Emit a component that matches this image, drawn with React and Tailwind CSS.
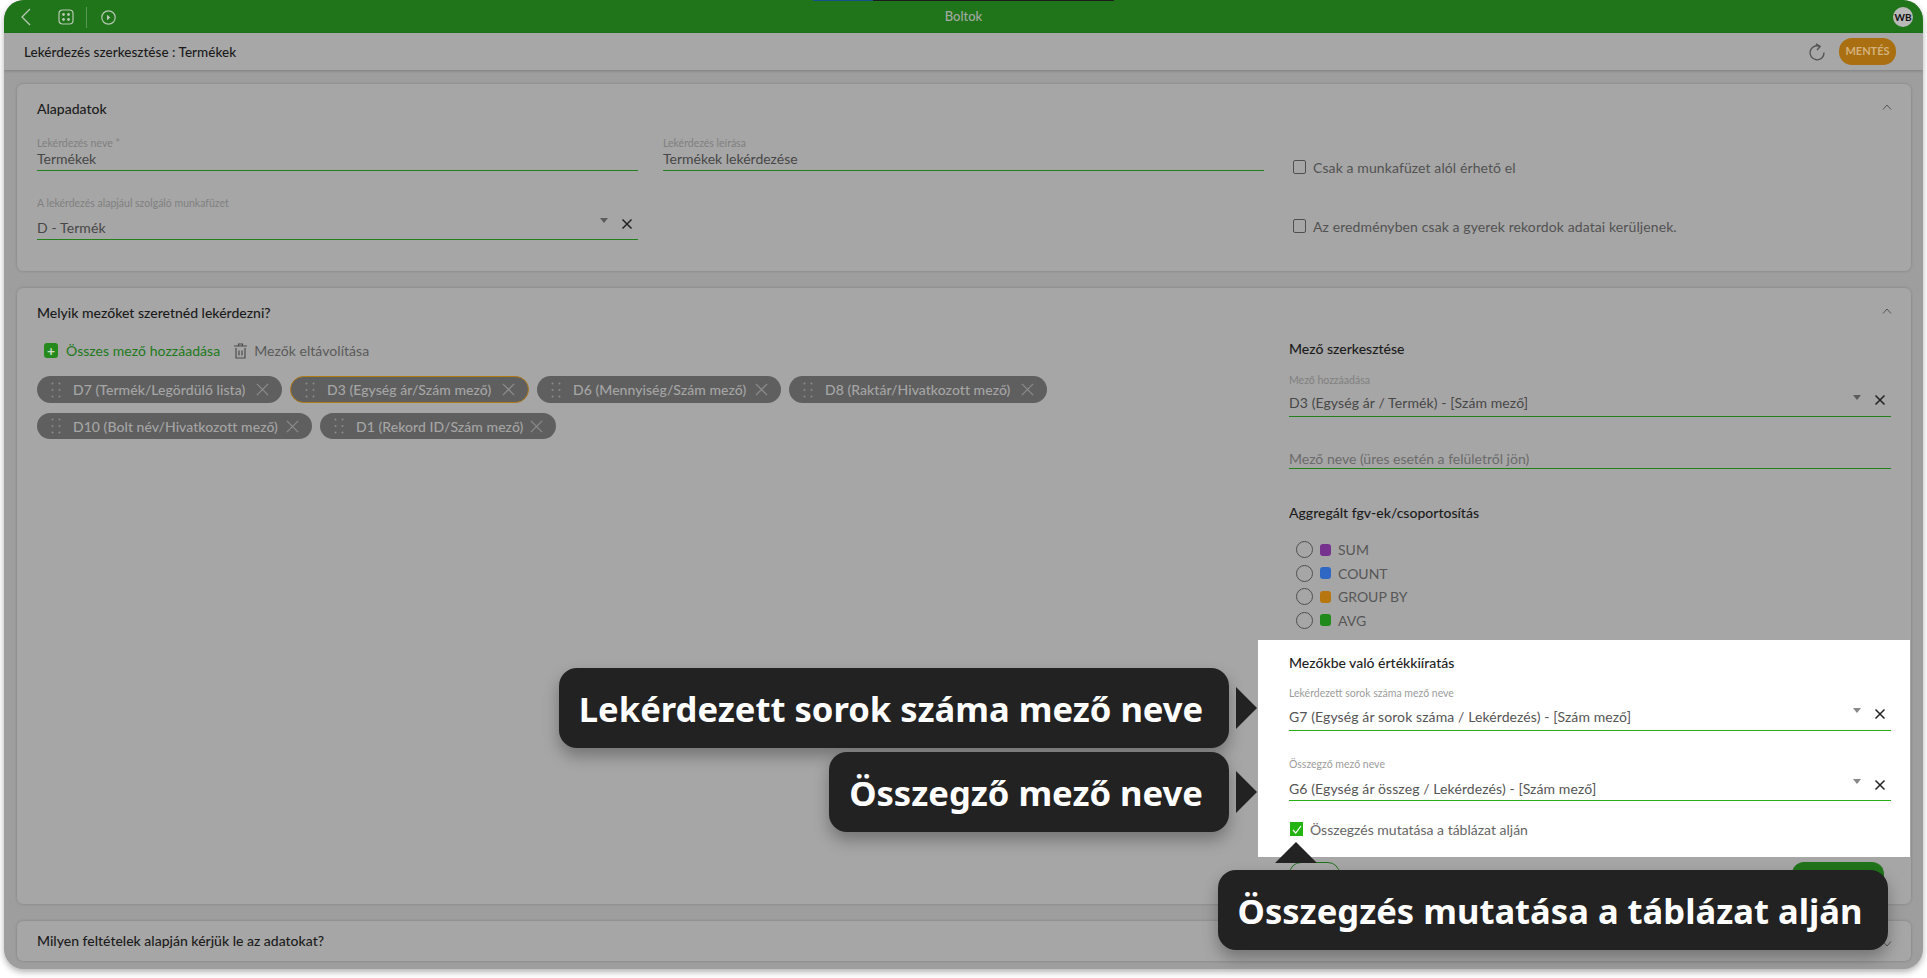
const FONT = "font-['Lato','Noto_Sans',sans-serif]";

function X({ size = 12, color = '#222', w = 1.5 }) {
  return (
    <svg width={size} height={size} viewBox="0 0 12 12" fill="none" stroke={color} strokeWidth={w} className="shrink-0">
      <path d="M1.5 1.5l9 9M10.5 1.5l-9 9" />
    </svg>
  );
}

function Field({ label, value }) {
  return (
    <div>
      <div className="h-[14px] text-[10.5px] leading-[14px] text-[#808080]">{label}</div>
      <div className="h-[20px] border-b border-[#23801a] box-content">
        <div className="text-[14px] leading-[18px] text-[#474747]">{value}</div>
      </div>
    </div>
  );
}

function Select({ label, value, pt, h, white, arrowTop = 'top-[8px]', xTop = 'top-[8px]' }) {
  return (
    <div>
      <div className={`h-[14px] text-[10.5px] leading-[14px] whitespace-nowrap ${white ? 'text-[#9c9c9c]' : 'text-[#808080]'}`}>{label}</div>
      <div className={`relative ${h} ${pt} border-b ${white ? 'border-[#27b214]' : 'border-[#23801a]'} box-content`}>
        <div className={`text-[14px] leading-[18px] tracking-[0.1px] ${white ? 'text-[#555]' : 'text-[#474747]'}`}>{value}</div>
        <div className={`absolute right-[30px] ${arrowTop} w-0 h-0 border-x-[4px] border-x-transparent border-t-[5px] ${white ? 'border-t-[#888]' : 'border-t-[#5c5c5c]'}`} />
        <div className={`absolute right-[5px] ${xTop}`}>
          <X size={12} color="#222" w={1.5} />
        </div>
      </div>
    </div>
  );
}

function Check({ text, mt }) {
  return (
    <div className={`${mt} h-[14px] flex items-center pl-[4px]`}>
      <div className="w-[13px] h-[14px] border border-[#4f4f4f] rounded-[2px] shrink-0" />
      <span className="ml-[7px] text-[14px] tracking-[0.1px] text-[#525252] whitespace-nowrap">{text}</span>
    </div>
  );
}

function Grip() {
  return (
    <svg width="10" height="16" viewBox="0 0 10 16" fill="#8d8d8d" className="shrink-0">
      <circle cx="1.5" cy="1.5" r="1" /><circle cx="8.5" cy="1.5" r="1" />
      <circle cx="1.5" cy="8" r="1" /><circle cx="8.5" cy="8" r="1" />
      <circle cx="1.5" cy="14.5" r="1" /><circle cx="8.5" cy="14.5" r="1" />
    </svg>
  );
}

function Chip({ w, text, active, h = 'h-[27px]' }) {
  return (
    <div className={`${w} ${h} rounded-full bg-[#5f5f5f] flex items-center pl-[14px] pr-[12px] shrink-0 ${active ? 'border border-[#b07a16]' : ''}`}>
      <Grip />
      <span className="ml-[12px] text-[14px] font-medium tracking-[0.05px] text-[#a5a5a5] whitespace-nowrap flex-1">{text}</span>
      <X size={15} color="#8c8c8c" w={1} />
    </div>
  );
}

function Radio({ color, text }) {
  return (
    <div className="h-[23.5px] flex items-center pl-[7px]">
      <div className="w-[17px] h-[17px] rounded-full border border-[#4f4f4f] shrink-0" />
      <div className={`ml-[7px] w-[11px] h-[12px] rounded-[3px] ${color}`} />
      <span className="ml-[7px] text-[14px] text-[#565656]">{text}</span>
    </div>
  );
}

function Callout({ cls, text }) {
  return (
    <div className={`absolute z-20 h-[80px] pt-[2px] pr-[6px] rounded-[18px] bg-[#222222] shadow-[0_8px_16px_rgba(0,0,0,0.3)] flex items-center justify-center text-white font-bold whitespace-nowrap text-[34.6px] font-['Noto_Sans',sans-serif] ${cls}`}>
      {text}
    </div>
  );
}

function Arrow({ cls }) {
  return (
    <div className={`absolute z-20 w-0 h-0 border-y-[21px] border-y-transparent border-l-[21px] border-l-[#222222] ${cls}`} />
  );
}

export default function App() {
  return (
    <div className={`relative w-full h-[978px] bg-white pl-[4px] pr-[4px] pb-[9px] overflow-hidden ${FONT}`}>
      <div className="h-full rounded-[20px] overflow-hidden flex flex-col bg-[#9e9e9e] shadow-[0_3px_6px_rgba(0,0,0,0.3)]">
        {/* top bar */}
        <div className="relative h-[33px] shrink-0 bg-[#20741a] flex items-center pl-[16px] pr-[10px] pt-[1px]">
          <div className="absolute top-0 left-[809px] h-[1px] w-[60px] bg-[#17508c]" />
          <div className="absolute top-0 left-[869px] h-[1px] w-[241px] bg-[#1d1d1d]" />
          <svg width="11" height="18" viewBox="0 0 11 18" fill="none" stroke="#b7c9b4" strokeWidth="1.3"><path d="M10 1L2 9l8 8" /></svg>
          <svg className="ml-[27px]" width="16" height="16" viewBox="0 0 16 16" fill="none" stroke="#b7c9b4" strokeWidth="1.2">
            <rect x="1" y="1" width="14" height="14" rx="3.5" />
            <g fill="#b7c9b4" stroke="none"><circle cx="5.5" cy="5.5" r="1.4" /><circle cx="10.5" cy="5.5" r="1.4" /><circle cx="5.5" cy="10.5" r="1.4" /><circle cx="10.5" cy="10.5" r="1.4" /></g>
          </svg>
          <div className="ml-[12px] w-px h-[21px] bg-[#5e9558]" />
          <svg className="ml-[14px]" width="15" height="15" viewBox="0 0 15 15" fill="none" stroke="#b7c9b4" strokeWidth="1.2">
            <circle cx="7.5" cy="7.5" r="6.7" />
            <path d="M6 4.8l3.4 2.7L6 10.2z" fill="#b7c9b4" stroke="none" />
          </svg>
          <div className="absolute inset-x-0 top-[7px] text-center text-[13px] leading-[18px] font-medium text-[#a3aaa2]">Boltok</div>
          <div className="ml-auto w-[20px] h-[20px] rounded-full bg-[#b9b9b9] flex items-center justify-center text-[10px] font-bold text-[#111]">WB</div>
        </div>
        {/* sub header */}
        <div className="h-[37px] shrink-0 bg-[#a7a7a7] flex items-center pl-[20px] pr-[27px] shadow-[0_1px_3px_rgba(0,0,0,0.2)] z-[1]">
          <div className="flex-1 pt-[1px] text-[13.5px] tracking-[0.03px] font-medium text-[#1b1b1b]">Lekérdezés szerkesztése : Termékek</div>
          <svg width="18" height="18" viewBox="0 0 18 18" fill="none" stroke="#555" strokeWidth="1.4">
            <path d="M11.5 3.3A7 7 0 1 0 16 9.5" />
            <path d="M8 .8l4.2 2.6L9 7" />
          </svg>
          <div className="ml-[13px] w-[57px] h-[27px] rounded-[13px] bg-[#a96f10] flex items-center justify-center text-[11px] font-bold text-[#d5b27c]">MENTÉS</div>
        </div>
        {/* content */}
        <div className="flex-1 min-h-0 pt-[14px] pl-[13px] pr-[12px] flex flex-col gap-[17px] text-[#1b1b1b]">
          {/* card 1 */}
          <section className="h-[187px] shrink-0 rounded-[6px] bg-[#a6a6a6] shadow-[0_0_3px_rgba(0,0,0,0.2)] pt-[14px] px-[20px]">
            <div className="h-[20px] flex items-center justify-between">
              <span className="text-[14px] font-medium">Alapadatok</span>
              <svg className="mr-[-1px] mb-[2px]" width="10" height="6" viewBox="0 0 10 6" fill="none" stroke="#555" strokeWidth="1"><path d="M1 5.5l4-4.5 4 4.5" /></svg>
            </div>
            <div className="mt-[18px] grid grid-cols-[601px_601px_1fr] gap-x-[25px] gap-y-[22px]">
              <Field label="Lekérdezés neve *" value="Termékek" />
              <Field label="Lekérdezés leírása" value="Termékek lekérdezése" />
              <Check mt="mt-[24px]" text="Csak a munkafüzet alól érhető el" />
              <Select label="A lekérdezés alapjául szolgáló munkafüzet" value="D - Termék" pt="pt-[9px]" h="h-[20px]" />
              <div />
              <Check mt="mt-[23px]" text="Az eredményben csak a gyerek rekordok adatai kerüljenek." />
            </div>
          </section>
          {/* card 2 */}
          <section className="h-[616px] shrink-0 rounded-[6px] bg-[#a6a6a6] shadow-[0_0_3px_rgba(0,0,0,0.2)] pt-[14px] px-[20px]">
            <div className="h-[20px] flex items-center justify-between">
              <span className="text-[14px] font-medium">Melyik mezőket szeretnéd lekérdezni?</span>
              <svg className="mr-[-1px] mb-[2px]" width="10" height="6" viewBox="0 0 10 6" fill="none" stroke="#555" strokeWidth="1"><path d="M1 5.5l4-4.5 4 4.5" /></svg>
            </div>
            <div className="flex gap-[51px]">
              <div className="flex-1 min-w-0">
                <div className="mt-[18px] h-[20px] flex items-center pl-[7px]">
                  <div className="mt-[1px] w-[14px] h-[15px] rounded-[3px] bg-[#258a1c] flex items-center justify-center text-[#c9dcc6] text-[14px] font-bold leading-none">+</div>
                  <span className="ml-[8px] text-[14px] tracking-[0.05px] text-[#21791b]">Összes mező hozzáadása</span>
                  <svg className="ml-[14px] mt-[1px]" width="13" height="16" viewBox="0 0 13 16" fill="none" stroke="#4d4d4d" strokeWidth="1.2">
                    <path d="M0 3h13M4.5 3V1h4v2M2 5v10h9V5M5 7.5v5M8 7.5v5" />
                  </svg>
                  <span className="ml-[7px] text-[14px] tracking-[0.05px] text-[#5a5a5a]">Mezők eltávolítása</span>
                </div>
                <div className="mt-[16px] flex flex-wrap gap-x-[8px] gap-y-[10px] w-[1020px]">
                  <Chip w="w-[245px]" text="D7 (Termék/Legördülő lista)" />
                  <Chip w="w-[239px]" text="D3 (Egység ár/Szám mező)" active />
                  <Chip w="w-[244px]" text="D6 (Mennyiség/Szám mező)" />
                  <Chip w="w-[258px]" text="D8 (Raktár/Hivatkozott mező)" />
                  <Chip w="w-[275px]" text="D10 (Bolt név/Hivatkozott mező)" h="h-[26px]" />
                  <Chip w="w-[236px]" text="D1 (Rekord ID/Szám mező)" h="h-[26px]" />
                </div>
              </div>
              <div className="w-[602px] shrink-0 mt-[17px]">
                <div className="h-[20px] text-[14px] font-medium leading-[20px]">Mező szerkesztése</div>
                <div className="mt-[14px]">
                  <Select label="Mező hozzáadása" value="D3 (Egység ár / Termék) - [Szám mező]" pt="pt-[7px]" h="h-[22px]" arrowTop="top-[8px]" xTop="top-[7px]" />
                </div>
                <div className="mt-[33px] h-[18px] border-b border-[#23801a] box-content text-[14px] leading-[18px] text-[#6b6b6b]">Mező neve (üres esetén a felületről jön)</div>
                <div className="mt-[34px] h-[20px] text-[14px] font-medium leading-[20px]">Aggregált fgv-ek/csoportosítás</div>
                <div className="mt-[15px]">
                  <Radio color="bg-[#77328f]" text="SUM" />
                  <Radio color="bg-[#2f68c4]" text="COUNT" />
                  <Radio color="bg-[#b7760f]" text="GROUP BY" />
                  <Radio color="bg-[#208a1a]" text="AVG" />
                </div>
                {/* highlighted panel */}
                <div className="mt-[8px] -ml-[31px] -mr-[19px] pl-[31px] pr-[19px] pt-[13px] pb-[21px] bg-white relative z-10">
                  <div className="h-[20px] text-[14px] font-medium leading-[20px] text-[#222]">Mezőkbe való értékkiíratás</div>
                  <div className="mt-[13px]">
                    <Select white label="Lekérdezett sorok száma mező neve" value="G7 (Egység ár sorok száma / Lekérdezés) - [Szám mező]" pt="pt-[8px]" h="h-[22px]" arrowTop="top-[8px]" xTop="top-[8px]" />
                  </div>
                  <div className="mt-[26px]">
                    <Select white label="Összegző mező neve" value="G6 (Egység ár összeg / Lekérdezés) - [Szám mező]" pt="pt-[9px]" h="h-[20px]" arrowTop="top-[8px]" xTop="top-[8px]" />
                  </div>
                  <div className="mt-[21px] h-[14px] flex items-center pl-[1px]">
                    <div className="w-[13px] h-[14px] bg-[#24b412] flex items-center justify-center shrink-0">
                      <svg width="10" height="9" viewBox="0 0 10 9" fill="none" stroke="#fff" strokeWidth="1.2"><path d="M1 5l2.7 3L9 1" /></svg>
                    </div>
                    <span className="ml-[7px] text-[14px] text-[#666]">Összegzés mutatása a táblázat alján</span>
                  </div>
                </div>
                <div className="mt-[5px] flex justify-between pr-[7px]">
                  <div className="w-[51px] h-[34px] rounded-[12px] border border-[#20741a]" />
                  <div className="w-[92px] h-[34px] rounded-[12px] bg-[#20741a]" />
                </div>
              </div>
            </div>
          </section>
          {/* card 3 */}
          <section className="h-[40px] shrink-0 rounded-[6px] bg-[#a6a6a6] shadow-[0_0_3px_rgba(0,0,0,0.2)] px-[20px] pb-[2px] flex items-center justify-between">
            <span className="text-[14px] font-medium">Milyen feltételek alapján kérjük le az adatokat?</span>
            <svg className="mr-[-1px] mt-[8px]" width="10" height="6" viewBox="0 0 10 6" fill="none" stroke="#555" strokeWidth="1"><path d="M1 .5l4 4.5 4-4.5" /></svg>
          </section>
        </div>
      </div>

      {/* tutorial callouts */}
      <Callout cls="left-[559px] top-[668px] w-[670px]" text="Lekérdezett sorok száma mező neve" />
      <Arrow cls="left-[1236px] top-[687px]" />
      <Callout cls="left-[829px] top-[752px] w-[400px]" text="Összegző mező neve" />
      <Arrow cls="left-[1236px] top-[771px]" />
      <Callout cls="left-[1218px] top-[870px] w-[670px]" text="Összegzés mutatása a táblázat alján" />
      <div className="absolute z-20 left-[1275px] top-[842px] w-0 h-0 border-x-[21px] border-x-transparent border-b-[21px] border-b-[#222222]" />
    </div>
  );
}
